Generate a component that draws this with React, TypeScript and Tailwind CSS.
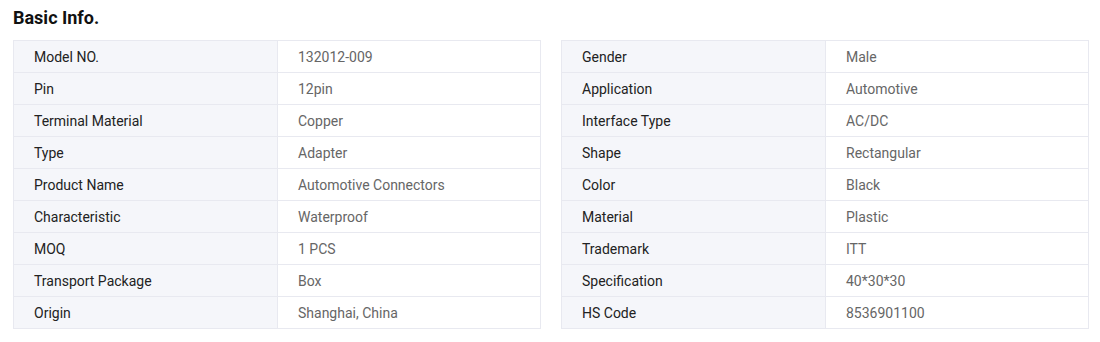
const left: [string, string][] = [
  ['Model NO.', '132012-009'],
  ['Pin', '12pin'],
  ['Terminal Material', 'Copper'],
  ['Type', 'Adapter'],
  ['Product Name', 'Automotive Connectors'],
  ['Characteristic', 'Waterproof'],
  ['MOQ', '1 PCS'],
  ['Transport Package', 'Box'],
  ['Origin', 'Shanghai, China'],
]

const right: [string, string][] = [
  ['Gender', 'Male'],
  ['Application', 'Automotive'],
  ['Interface Type', 'AC/DC'],
  ['Shape', 'Rectangular'],
  ['Color', 'Black'],
  ['Material', 'Plastic'],
  ['Trademark', 'ITT'],
  ['Specification', '40*30*30'],
  ['HS Code', '8536901100'],
]

function InfoTable({ rows }: { rows: [string, string][] }) {
  return (
    <table className="w-full border-collapse table-fixed text-[14px]">
      <colgroup>
        <col className="w-[264px]" />
        <col />
      </colgroup>
      <tbody>
        {rows.map(([k, v]) => (
          <tr key={k} className="h-[32px]">
            <td className="border border-[#e8e9f0] bg-[#f5f6fa] pl-[20px] text-[#222] leading-none">{k}</td>
            <td className="border border-[#e8e9f0] bg-white pl-[20px] text-[#666] leading-none">{v}</td>
          </tr>
        ))}
      </tbody>
    </table>
  )
}

export default function App() {
  return (
    <div className="bg-white w-[1100px] h-[342px] pl-[13px] pr-[11px] font-['Roboto',sans-serif]">
      <h2 className="text-[18px] font-bold text-[#111] leading-none pt-[9px] h-[40px]">Basic Info.</h2>
      <div className="grid grid-cols-2 gap-[20px]">
        <InfoTable rows={left} />
        <InfoTable rows={right} />
      </div>
    </div>
  )
}
